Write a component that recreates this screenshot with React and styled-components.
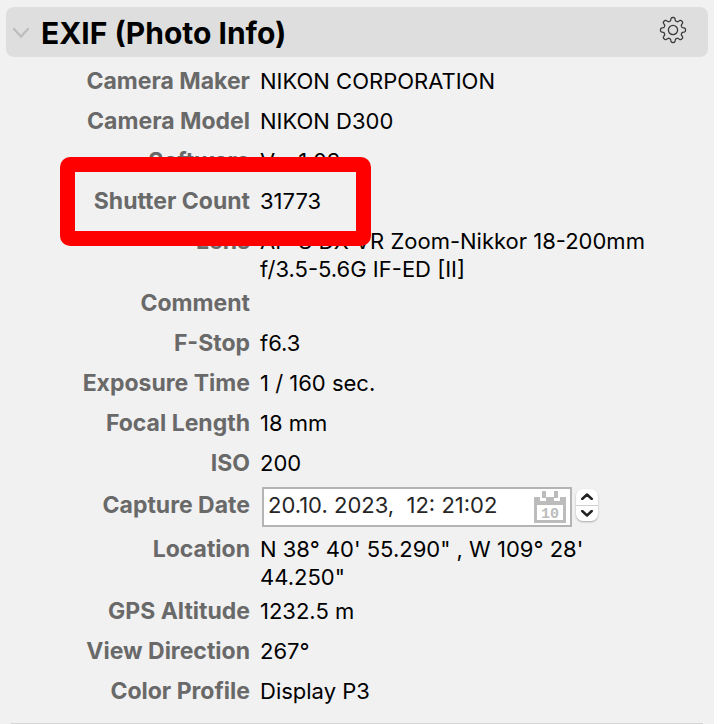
import { useState } from "react";
import styled, { createGlobalStyle } from "styled-components";

const fields = [
  { label: "Camera Maker", value: "NIKON CORPORATION" },
  { label: "Camera Model", value: "NIKON D300" },
  { label: "Software", value: "Ver.1.03" },
  { label: "Shutter Count", value: "31773", marked: true },
  { label: "Lens", value: "AF-S DX VR Zoom-Nikkor 18-200mm f/3.5-5.6G IF-ED [II]" },
  { label: "Comment", value: "" },
  { label: "F-Stop", value: "f6.3" },
  { label: "Exposure Time", value: "1 / 160 sec." },
  { label: "Focal Length", value: "18 mm" },
  { label: "ISO", value: "200" },
  { label: "Capture Date", type: "date" },
  { label: "Location", value: "N 38° 40' 55.290\" , W 109° 28' 44.250\"" },
  { label: "GPS Altitude", value: "1232.5 m" },
  { label: "View Direction", value: "267°" },
  { label: "Color Profile", value: "Display P3" },
];

// outline of a cog with eight rounded teeth, drawn around the origin
const cogPath = () => {
  const points = [];
  for (let i = 0; i <= 160; i++) {
    const angle = (i / 160) * Math.PI * 2;
    const wave = Math.tanh(2.2 * Math.cos(8 * angle)) / Math.tanh(2.2);
    const radius = 10.9 + 1.6 * wave;
    points.push(
      `${(radius * Math.sin(angle)).toFixed(2)} ${(-radius * Math.cos(angle)).toFixed(2)}`
    );
  }
  return `M${points.join("L")}Z`;
};

const CogIcon = () => (
  <svg width="28" height="28" viewBox="-14 -14 28 28" fill="none" stroke="#3c3c3c" strokeWidth="1.3">
    <path d={cogPath()} />
    <circle r="4.6" />
  </svg>
);

const CalendarIcon = () => (
  <svg width="32" height="32" viewBox="0 0 32 32" fill="#bcbcbc">
    <path d="M0 6h6v4h20V6h6v26H0zM3 14v15h26V14z" fillRule="evenodd" />
    <path d="M12 6h8v5h-8zM8 0h4v7H8zM20 0h4v7h-4z" />
    <text x="16" y="27" textAnchor="middle">
      10
    </text>
  </svg>
);

const DateField = () => {
  const [date, setDate] = useState("20.10. 2023,  12: 21:02");

  return (
    <DateContainer>
      <DateBox>
        <DateInput
          id="capture-date"
          value={date}
          onChange={(event) => setDate(event.target.value)}
        />
        <CalendarButton type="button" aria-label="Open calendar">
          <CalendarIcon />
        </CalendarButton>
      </DateBox>
      <Stepper>
        <StepButton type="button" aria-label="Increase">
          <svg width="12" height="7" viewBox="0 0 12 7">
            <path d="M1.2 6L6 1.5L10.8 6" />
          </svg>
        </StepButton>
        <StepButton type="button" aria-label="Decrease">
          <svg width="12" height="7" viewBox="0 0 12 7">
            <path d="M1.2 1L6 5.5L10.8 1" />
          </svg>
        </StepButton>
      </Stepper>
    </DateContainer>
  );
};

const App = () => {
  const [open, setOpen] = useState(true);

  return (
    <>
      <GlobalStyle />
      <Panel>
        <Header>
          <Toggle type="button" aria-expanded={open} onClick={() => setOpen(!open)}>
            <svg width="18" height="12" viewBox="0 0 18 12">
              <path d="M2 2L9 9.5L16 2" />
            </svg>
            <Title>EXIF (Photo Info)</Title>
          </Toggle>
          <SettingsButton type="button" aria-label="Settings">
            <CogIcon />
          </SettingsButton>
        </Header>
        {open && (
          <Fields>
            {fields.map(({ label, value, type, marked }) =>
              type === "date" ? (
                <DateRow key={label}>
                  <Name>
                    <label htmlFor="capture-date">{label}</label>
                  </Name>
                  <Value>
                    <DateField />
                  </Value>
                </DateRow>
              ) : (
                <Row key={label}>
                  <Name>{label}</Name>
                  <Value>{value}</Value>
                  {marked && <Marker />}
                </Row>
              )
            )}
          </Fields>
        )}
        <Divider />
      </Panel>
    </>
  );
};

const GlobalStyle = createGlobalStyle`
  * {
    box-sizing: border-box;
  }

  body {
    margin: 0;
    background-color: #ffffff;
    font-family: Inter, "Liberation Sans", sans-serif;
    font-size: 22px;
    line-height: 28px;
    color: #000000;
  }

  button,
  input {
    font: inherit;
    color: inherit;
    padding: 0;
    border: 0;
    background: none;
  }
`;

const Panel = styled.section`
  margin-right: 4px;
  padding: 7px 6px 0;
  background-color: #f1f1f1;
`;

const Header = styled.header`
  display: flex;
  align-items: center;
  justify-content: space-between;
  height: 50px;
  padding: 0 21px 0 6px;
  border-radius: 8px;
  background-color: #dedede;
`;

const Toggle = styled.button`
  display: flex;
  align-items: center;
  gap: 11px;
  padding-top: 2px;
  cursor: pointer;

  path {
    fill: none;
    stroke: #bdbdbd;
    stroke-width: 2.4;
    stroke-linecap: round;
  }
`;

const Title = styled.span`
  font-size: 30px;
  font-weight: 700;
  line-height: 40px;
`;

const SettingsButton = styled.button`
  display: flex;
  margin-bottom: 4px;
  cursor: pointer;
`;

const Fields = styled.dl`
  display: flex;
  flex-direction: column;
  gap: 6px;
  margin: 10px 0 0;
`;

const Row = styled.div`
  position: relative;
  display: grid;
  grid-template-columns: 244px minmax(0, 400px);
  column-gap: 10px;
  min-height: 34px;
`;

const Name = styled.dt`
  font-size: 23px;
  font-weight: 700;
  text-align: right;
  color: #696969;
`;

const Value = styled.dd`
  margin: 0;
`;

const DateRow = styled(Row)`
  margin: -2px 0 2px;

  ${Name} {
    padding-top: 4px;
  }
`;

const Marker = styled.div`
  position: absolute;
  z-index: 1;
  top: -30px;
  bottom: -25px;
  left: 54px;
  width: 311px;
  border: 15px solid #ff0000;
  border-radius: 10px;
  pointer-events: none;
`;

const DateContainer = styled.div`
  display: flex;
  gap: 4px;
  padding-left: 2px;
`;

const DateBox = styled.div`
  display: flex;
  align-items: center;
  width: 310px;
  height: 40px;
  padding: 0 4px;
  border: 2px solid #b4b4b4;
  background-color: #ffffff;
`;

const DateInput = styled.input`
  flex: 1;
  min-width: 0;
  padding-bottom: 4px;
  outline: none;
  color: #262626;
`;

const CalendarButton = styled.button`
  display: flex;
  cursor: pointer;

  text {
    font-family: "Liberation Mono", monospace;
    font-size: 15px;
    font-weight: 700;
  }
`;

const Stepper = styled.div`
  display: flex;
  flex-direction: column;
  width: 22px;
  height: 32px;
  margin-top: 2px;
  border-radius: 7px;
  background-color: #ffffff;
  box-shadow: 0 1px 2px rgba(0, 0, 0, 0.3);
`;

const StepButton = styled.button`
  display: flex;
  flex: 1;
  align-items: center;
  justify-content: center;
  cursor: pointer;

  & + & {
    border-top: 1px solid #d0d0d0;
  }

  path {
    fill: none;
    stroke: #222222;
    stroke-width: 2.4;
    stroke-linecap: round;
    stroke-linejoin: round;
  }
`;

const Divider = styled.hr`
  height: 1px;
  margin: 12px 5px 0;
  border: 0;
  background-color: #d6d6d6;
`;

export default App;
